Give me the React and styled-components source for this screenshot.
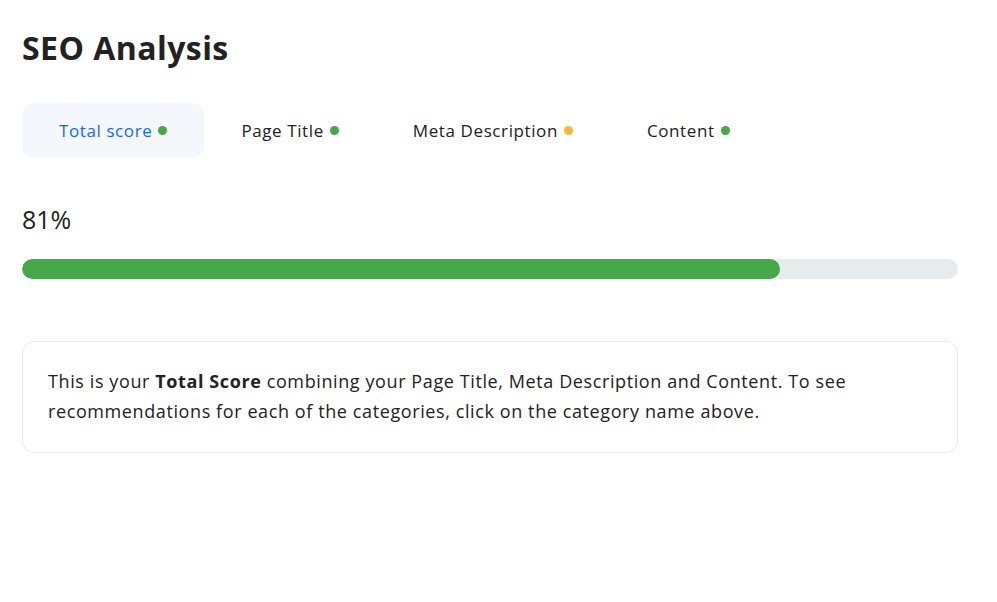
import React, { useState } from "react"
import styled, { createGlobalStyle } from "styled-components"

const GlobalStyle = createGlobalStyle`
    body{
        margin: 0;
        background: #ffffff;
        font-family: "Open Sans", "Liberation Sans", sans-serif;
        color: #222222;
    }
`

const Page = styled.main`
    padding: 26px 39px 40px 22px;
`

const Title = styled.h1`
    margin: 0 0 33px;
    font-size: 32px;
    font-weight: 700;
    line-height: 44px;
    letter-spacing: 0.45px;
`

const Tabs = styled.nav`
    display: flex;
    margin-bottom: 46px;
`

const Tab = styled.button`
    display: flex;
    align-items: center;
    gap: 6px;
    height: 55px;
    padding: 0 37px;
    border: none;
    border-radius: 12px;
    background: ${({ $active }) => ($active ? "#f4f8fd" : "transparent")};
    color: ${({ $active }) => ($active ? "#1a66f0" : "#222222")};
    font-family: inherit;
    font-size: 17px;
    letter-spacing: 0.6px;
    cursor: pointer;
`

const Dot = styled.span`
    width: 9px;
    height: 9px;
    border-radius: 50%;
    background: ${({ $status }) => ($status === "warn" ? "#fbb73c" : "#47a84a")};
`

const Score = styled.div`
    font-size: 25px;
    line-height: 30px;
    margin-bottom: 25px;
`

const Track = styled.div`
    height: 20px;
    border-radius: 10px;
    background: #e8ebee;
    overflow: hidden;
    margin-bottom: 62px;
`

const Fill = styled.div`
    height: 100%;
    border-radius: 10px;
    background: #47a84a;
`

const Card = styled.div`
    border: 1px solid #e9e9e9;
    border-radius: 12px;
    padding: 24px 25px 26px;
    font-size: 18px;
    line-height: 30px;
    letter-spacing: 0.6px;
    p{
        margin: 0;
    }
    strong{
        font-weight: 700;
    }
`

const tabs = [
    { label: "Total score", status: "ok" },
    { label: "Page Title", status: "ok" },
    { label: "Meta Description", status: "warn" },
    { label: "Content", status: "ok" },
]

export default function App() {
    const [active, setActive] = useState(0)
    const score = 81
    return (
        <>
            <GlobalStyle />
            <Page>
                <Title>SEO Analysis</Title>
                <Tabs>
                    {tabs.map((t, i) => (
                        <Tab key={t.label} $active={i === active} onClick={() => setActive(i)}>
                            {t.label}
                            <Dot $status={t.status} />
                        </Tab>
                    ))}
                </Tabs>
                <Score>{score}%</Score>
                <Track>
                    <Fill style={{ width: score + "%" }} />
                </Track>
                <Card>
                    <p>
                        This is your <strong>Total Score</strong> combining your Page Title, Meta Description and Content. To see
                        recommendations for each of the categories, click on the category name above.
                    </p>
                </Card>
            </Page>
        </>
    )
}
